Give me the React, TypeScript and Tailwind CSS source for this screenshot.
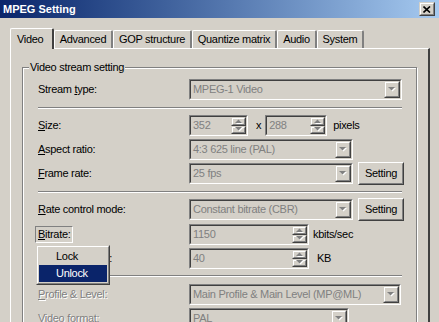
import React from "react";

const tabs = [
  { label: "Video", w: "w-[44px]", active: true },
  { label: "Advanced", w: "w-[59px]" },
  { label: "GOP structure", w: "w-[79px]" },
  { label: "Quantize matrix", w: "w-[85px]" },
  { label: "Audio", w: "w-[40px]" },
  { label: "System", w: "w-[47px]" },
];

function Arrow({ up = false }: { up?: boolean }) {
  const pts = up ? "0,4 3.5,0.5 7,4" : "0,0 7,0 3.5,3.5";
  return (
    <svg width="8" height="5" viewBox="0 0 8 5" className="block">
      <polygon points={pts} transform="translate(1,1)" fill="#ffffff" />
      <polygon points={pts} fill="#808080" />
    </svg>
  );
}

function Raised({ className = "", children }: { className?: string; children?: React.ReactNode }) {
  return (
    <div className={`border border-t-[#D4D0C8] border-l-[#D4D0C8] border-r-[#404040] border-b-[#404040] ${className}`}>
      <div className="flex h-full w-full items-center justify-center border border-t-white border-l-white border-r-[#808080] border-b-[#808080] bg-[#D4D0C8]">
        {children}
      </div>
    </div>
  );
}

function Sunken({ className = "", children }: { className?: string; children?: React.ReactNode }) {
  return (
    <div className={`h-[21px] border border-t-[#808080] border-l-[#808080] border-r-white border-b-white ${className}`}>
      <div className="flex h-full w-full items-center border border-t-[#404040] border-l-[#404040] border-r-[#D4D0C8] border-b-[#D4D0C8] bg-[#D4D0C8]">
        {children}
      </div>
    </div>
  );
}

function Combo({ value, className }: { value: string; className: string }) {
  return (
    <Sunken className={className}>
      <span className="flex-1 truncate pl-[2px] text-[#808080]">{value}</span>
      <Raised className="h-[17px] w-[16px]">
        <Arrow />
      </Raised>
    </Sunken>
  );
}

function Spin({ value, className }: { value: string; className: string }) {
  return (
    <Sunken className={className}>
      <span className="flex-1 pl-[2px] text-[#808080]">{value}</span>
      <div className="flex h-full w-[15px] flex-col">
        <Raised className="h-1/2 w-full">
          <Arrow up />
        </Raised>
        <Raised className="h-1/2 w-full">
          <Arrow />
        </Raised>
      </div>
    </Sunken>
  );
}

function PushButton({ label }: { label: string }) {
  return (
    <div className="h-[23px] w-[46px] border border-t-white border-l-white border-r-[#404040] border-b-[#404040]">
      <div className="flex h-full w-full items-center justify-center border border-t-[#D4D0C8] border-l-[#D4D0C8] border-r-[#808080] border-b-[#808080]">
        {label}
      </div>
    </div>
  );
}

function Label({ pre = "", u, rest, disabled = false }: { pre?: string; u: string; rest: string; disabled?: boolean }) {
  return (
    <div className={`w-[151px] shrink-0 ${disabled ? "text-[#808080] [text-shadow:1px_1px_0_#fff]" : ""}`}>
      {pre}
      <u>{u}</u>
      {rest}
    </div>
  );
}

function Separator({ className }: { className: string }) {
  return <div className={`h-[2px] w-[364px] border-t border-t-[#808080] border-b border-b-white ${className}`} />;
}

export default function App() {
  return (
    <div className="relative h-[322px] w-[439px] overflow-hidden bg-[#D4D0C8] font-['Liberation_Sans',Arial,sans-serif] text-[11px] leading-none text-black">
      {/* caption */}
      <div className="flex h-[18px] items-center justify-between bg-gradient-to-r from-[#0A246A] to-[#A6CAF0] pl-[3px] pr-[4px]">
        <span className="font-bold text-white">MPEG Setting</span>
        <Raised className="h-[14px] w-[16px]">
          <svg width="8" height="7" viewBox="0 0 8 7">
            <path d="M0.5 0.5 L7 6.5 M7 0.5 L0.5 6.5" stroke="#000" strokeWidth="1.6" />
          </svg>
        </Raised>
      </div>

      <div className="tracking-[-0.3px]">
        {/* tabs */}
        <div className="ml-[10px] mt-[10px] flex h-[20px] items-end">
          {tabs.map((t) =>
            t.active ? (
              <div
                key={t.label}
                className={`relative z-10 -mb-px flex h-[21px] ${t.w} items-center rounded-t-[2px] border-l border-t border-r-2 border-l-white border-t-white border-r-[#404040] bg-[#D4D0C8] pl-[6px]`}
              >
                {t.label}
              </div>
            ) : (
              <div
                key={t.label}
                className={`flex h-[18px] ${t.w} items-center justify-center rounded-t-[2px] border-l border-t border-r-2 border-l-white border-t-white border-r-[#808080]`}
              >
                {t.label}
              </div>
            )
          )}
        </div>

        {/* tab page */}
        <div className="ml-[10px] h-[300px] w-[420px] border-l border-t border-r-2 border-l-white border-t-white border-r-[#404040] pl-[11px] pt-[18px]">
          <div className="relative h-[300px] w-[395px] border border-[#808080] pl-[15px] pt-[11px] shadow-[inset_1px_1px_0_#fff,1px_1px_0_#fff]">
            <span className="absolute -top-[6px] left-[6px] bg-[#D4D0C8] px-px">Video stream setting</span>

            <div className="flex h-[21px] items-center">
              <Label pre="Stream " u="t" rest="ype:" />
              <Combo value="MPEG-1 Video" className="w-[213px]" />
            </div>

            <Separator className="mt-[7px]" />

            <div className="mt-[6px] flex h-[21px] items-center">
              <Label u="S" rest="ize:" />
              <Spin value="352" className="w-[59px]" />
              <span className="ml-[8px]">x</span>
              <Spin value="288" className="ml-[4px] w-[62px]" />
              <span className="ml-[6px]">pixels</span>
            </div>

            <div className="mt-[3px] flex h-[21px] items-center">
              <Label u="A" rest="spect ratio:" />
              <Combo value="4:3 625 line (PAL)" className="w-[164px]" />
            </div>

            <div className="mt-[3px] flex h-[21px] items-center">
              <Label u="F" rest="rame rate:" />
              <Combo value="25 fps" className="w-[164px]" />
              <div className="ml-[5px]">
                <PushButton label="Setting" />
              </div>
            </div>

            <Separator className="mt-[7px]" />

            <div className="mt-[6px] flex h-[21px] items-center">
              <Label u="R" rest="ate control mode:" />
              <Combo value="Constant bitrate (CBR)" className="w-[164px]" />
              <div className="ml-[5px]">
                <PushButton label="Setting" />
              </div>
            </div>

            <div className="mt-[4px] flex h-[21px] items-center">
              <div className="w-[151px] shrink-0">
                <span className="-ml-[3px] inline-block border border-t-[#808080] border-l-[#808080] border-r-white border-b-white px-[2px] py-[2px]">
                  <u>B</u>itrate:
                </span>
              </div>
              <Spin value="1150" className="w-[120px]" />
              <span className="ml-[4px]">kbits/sec</span>
            </div>

            <div className="mt-[3px] flex h-[21px] items-center">
              <Label pre="VBV buffer size" u="" rest=":" />
              <Spin value="40" className="w-[120px]" />
              <span className="ml-[8px]">KB</span>
            </div>

            <Separator className="mt-[6px]" />

            <div className="mt-[7px] flex h-[21px] items-center">
              <Label u="P" rest="rofile & Level:" disabled />
              <Combo value="Main Profile & Main Level (MP@ML)" className="w-[212px]" />
            </div>

            <div className="mt-[3px] flex h-[21px] items-center">
              <Label u="V" rest="ideo format:" disabled />
              <Combo value="PAL" className="w-[160px]" />
            </div>
          </div>
        </div>

        {/* context menu over the bitrate label */}
        <div className="absolute left-[36px] top-[245px] w-[74px] border border-t-[#D4D0C8] border-l-[#D4D0C8] border-r-[#404040] border-b-[#404040]">
          <div className="border border-t-white border-l-white border-r-[#808080] border-b-[#808080] bg-[#D4D0C8] p-px">
            <div className="flex h-[17px] items-center pl-[17px]">Lock</div>
            <div className="flex h-[17px] items-center bg-[#0A246A] pl-[17px] text-white">Unlock</div>
          </div>
        </div>
      </div>
    </div>
  );
}
